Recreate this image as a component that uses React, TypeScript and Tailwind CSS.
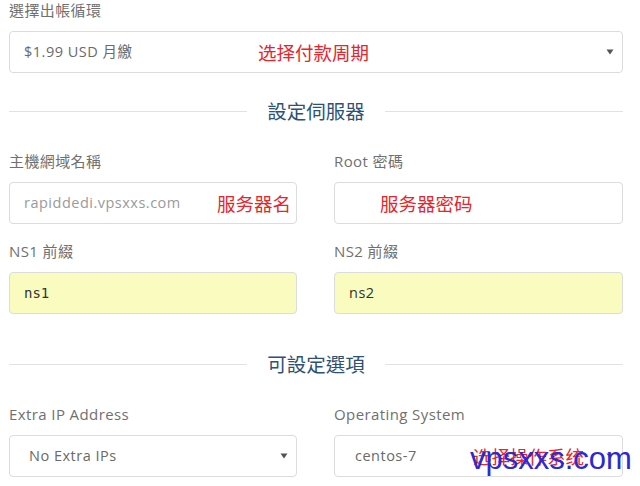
const font = { fontFamily: '"Open Sans", "Noto Sans CJK TC", sans-serif' };

function Caret() {
  return (
    <svg width="8" height="6" viewBox="0 0 8 6" className="shrink-0">
      <path d="M0.5 0.5 L7.5 0.5 L4 5.5 Z" fill="#555" />
    </svg>
  );
}

function Field({ label, children }: { label: string; children: React.ReactNode }) {
  return (
    <div className="flex flex-col">
      <div className="text-[15px] leading-[20px] tracking-[0.4px] text-[#707070] h-[20px] whitespace-nowrap">{label}</div>
      <div className="mt-[11px]">{children}</div>
    </div>
  );
}

function Box({ yellow, children }: { yellow?: boolean; children: React.ReactNode }) {
  return (
    <div
      className={`relative h-[42px] rounded-[4px] border border-[#dcdcdc] flex items-center ${
        yellow ? 'bg-[#fafcbf]' : 'bg-white'
      }`}
    >
      {children}
    </div>
  );
}

function Divider({ title }: { title: string }) {
  return (
    <div className="flex items-center gap-[20px] h-[30px]">
      <div className="flex-1 h-px bg-[#e2e2e2]" />
      <div
        className="text-[19.5px] text-[#2d5275]"
        style={{ fontFamily: '"Noto Sans CJK TC", sans-serif' }}
      >
        {title}
      </div>
      <div className="flex-1 h-px bg-[#e2e2e2]" />
    </div>
  );
}

function Note({ left, children }: { left: string; children: React.ReactNode }) {
  return (
    <span
      className={`absolute top-1/2 -translate-y-1/2 ${left} text-[#e5262c] text-[18.5px] leading-none whitespace-nowrap`}
      style={{ fontFamily: '"Noto Sans CJK SC", sans-serif' }}
    >
      {children}
    </span>
  );
}

const value = 'text-[14.5px] tracking-[0.5px]';

export default function App() {
  return (
    <div className="w-[640px] h-[486px] bg-white overflow-hidden relative" style={font}>
      <div className="w-[614px] ml-[9px]">
        <Field label="選擇出帳循環">
          <Box>
            <span className={`ml-[14px] ${value} text-[#6a6a6a]`}>$1.99 USD 月繳</span>
            <Note left="left-[248px]">选择付款周期</Note>
            <span className="ml-auto mr-[8px]"><Caret /></span>
          </Box>
        </Field>

        <div className="mt-[23px]">
          <Divider title="設定伺服器" />
        </div>

        <div className="mt-[25px] grid grid-cols-[288px_289px] gap-x-[37px] gap-y-[17px]">
          <Field label="主機網域名稱">
            <Box>
              <span className={`ml-[14px] ${value} text-[#9a9a9a]`}>rapiddedi.vpsxxs.com</span>
              <Note left="left-[207px]">服务器名</Note>
            </Box>
          </Field>
          <Field label="Root 密碼">
            <Box>
              <Note left="left-[45px]">服务器密码</Note>
            </Box>
          </Field>
          <Field label="NS1 前綴">
            <Box yellow>
              <span className="ml-[14px] text-[14px] text-[#333]" style={{ fontFamily: '"DejaVu Sans Mono", monospace' }}>ns1</span>
            </Box>
          </Field>
          <Field label="NS2 前綴">
            <Box yellow>
              <span className={`ml-[14px] ${value} text-[#333]`}>ns2</span>
            </Box>
          </Field>
        </div>

        <div className="mt-[35px]">
          <Divider title="可設定選項" />
        </div>

        <div className="mt-[25px] grid grid-cols-[288px_289px] gap-x-[37px]">
          <Field label="Extra IP Address">
            <Box>
              <span className={`ml-[19px] ${value} text-[#6a6a6a]`}>No Extra IPs</span>
              <span className="ml-auto mr-[8px]"><Caret /></span>
            </Box>
          </Field>
          <Field label="Operating System">
            <Box>
              <span className={`ml-[20px] ${value} text-[#6a6a6a]`}>centos-7</span>
              <Note left="left-[138px]">选择操作系统</Note>
              <span className="ml-auto mr-[8px]"><Caret /></span>
            </Box>
          </Field>
        </div>
      </div>

      <div
        className="absolute left-[470px] top-[443px] text-[31px] leading-none text-[#2a2ad4]"
        style={{ fontFamily: '"Liberation Sans", sans-serif' }}
      >
        vpsxxs.com
      </div>
    </div>
  );
}
